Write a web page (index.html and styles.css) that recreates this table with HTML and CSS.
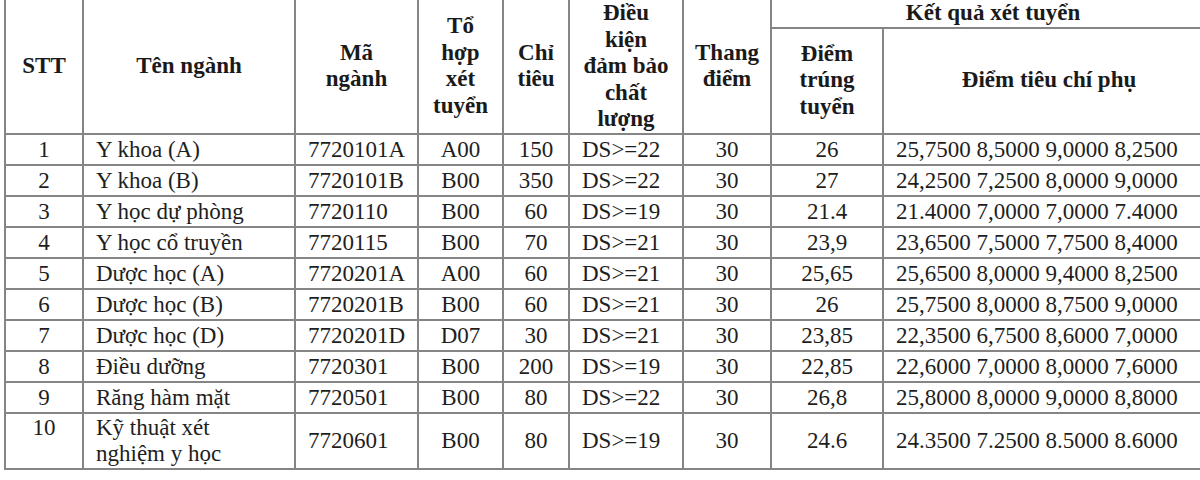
FILE: index.html
```html
<!DOCTYPE html>
<html lang="vi">
<head>
<meta charset="utf-8">
<title>Kết quả xét tuyển</title>
<link rel="stylesheet" href="styles.css">
</head>
<body>
<table class="tbl">
  <colgroup>
    <col class="c-stt"><col class="c-ten"><col class="c-ma"><col class="c-to"><col class="c-chi">
    <col class="c-dk"><col class="c-thang"><col class="c-trung"><col class="c-phu">
  </colgroup>
  <thead>
    <tr class="h1">
      <th rowspan="2">STT</th>
      <th rowspan="2">Tên ngành</th>
      <th rowspan="2">Mã<br>ngành</th>
      <th rowspan="2">Tổ<br>hợp<br>xét<br>tuyển</th>
      <th rowspan="2">Chỉ<br>tiêu</th>
      <th rowspan="2">Điều<br>kiện<br>đảm bảo<br>chất<br>lượng</th>
      <th rowspan="2">Thang<br>điểm</th>
      <th colspan="2" class="group">Kết quả xét tuyển</th>
    </tr>
    <tr class="h2">
      <th>Điểm<br>trúng<br>tuyển</th>
      <th>Điểm tiêu chí phụ</th>
    </tr>
  </thead>
  <tbody>
    <tr><td class="ctr">1</td><td>Y khoa (A)</td><td>7720101A</td><td class="ctr">A00</td><td class="ctr">150</td><td>DS&gt;=22</td><td class="ctr">30</td><td class="ctr">26</td><td>25,7500 8,5000 9,0000 8,2500</td></tr>
    <tr><td class="ctr">2</td><td>Y khoa (B)</td><td>7720101B</td><td class="ctr">B00</td><td class="ctr">350</td><td>DS&gt;=22</td><td class="ctr">30</td><td class="ctr">27</td><td>24,2500 7,2500 8,0000 9,0000</td></tr>
    <tr><td class="ctr">3</td><td>Y học dự phòng</td><td>7720110</td><td class="ctr">B00</td><td class="ctr">60</td><td>DS&gt;=19</td><td class="ctr">30</td><td class="ctr">21.4</td><td>21.4000 7,0000 7,0000 7.4000</td></tr>
    <tr><td class="ctr">4</td><td>Y học cổ truyền</td><td>7720115</td><td class="ctr">B00</td><td class="ctr">70</td><td>DS&gt;=21</td><td class="ctr">30</td><td class="ctr">23,9</td><td>23,6500 7,5000 7,7500 8,4000</td></tr>
    <tr><td class="ctr">5</td><td>Dược học (A)</td><td>7720201A</td><td class="ctr">A00</td><td class="ctr">60</td><td>DS&gt;=21</td><td class="ctr">30</td><td class="ctr">25,65</td><td>25,6500 8,0000 9,4000 8,2500</td></tr>
    <tr><td class="ctr">6</td><td>Dược học (B)</td><td>7720201B</td><td class="ctr">B00</td><td class="ctr">60</td><td>DS&gt;=21</td><td class="ctr">30</td><td class="ctr">26</td><td>25,7500 8,0000 8,7500 9,0000</td></tr>
    <tr><td class="ctr">7</td><td>Dược học (D)</td><td>7720201D</td><td class="ctr">D07</td><td class="ctr">30</td><td>DS&gt;=21</td><td class="ctr">30</td><td class="ctr">23,85</td><td>22,3500 6,7500 8,6000 7,0000</td></tr>
    <tr><td class="ctr">8</td><td>Điều dưỡng</td><td>7720301</td><td class="ctr">B00</td><td class="ctr">200</td><td>DS&gt;=19</td><td class="ctr">30</td><td class="ctr">22,85</td><td>22,6000 7,0000 8,0000 7,6000</td></tr>
    <tr><td class="ctr">9</td><td>Răng hàm mặt</td><td>7720501</td><td class="ctr">B00</td><td class="ctr">80</td><td>DS&gt;=22</td><td class="ctr">30</td><td class="ctr">26,8</td><td>25,8000 8,0000 9,0000 8,8000</td></tr>
    <tr class="tall"><td class="ctr top">10</td><td>Kỹ thuật xét<br>nghiệm y học</td><td>7720601</td><td class="ctr">B00</td><td class="ctr">80</td><td>DS&gt;=19</td><td class="ctr">30</td><td class="ctr">24.6</td><td>24.3500 7.2500 8.5000 8.6000</td></tr>
  </tbody>
</table>
</body>
</html>
```
FILE: styles.css
```css
html, body {
  margin: 0;
  padding: 0;
  background: #ffffff;
  overflow: hidden;
  width: 1200px;
  height: 480px;
}

.tbl {
  border-collapse: collapse;
  table-layout: fixed;
  width: 1210px;
  margin: -2px 0 0 4px;
  font-family: "Times New Roman", "Liberation Serif", "DejaVu Serif", serif;
  font-size: 23px;
  color: #1e1e1e;
}

.tbl th,
.tbl td {
  font-family: "Times New Roman", "Liberation Serif", "DejaVu Serif", serif;
}

.c-stt { width: 78px; }
.c-ten { width: 212px; }
.c-ma { width: 123px; }
.c-to { width: 85px; }
.c-chi { width: 66px; }
.c-dk { width: 114px; }
.c-thang { width: 88px; }
.c-trung { width: 112px; }
.c-phu { width: 332px; }

.tbl th,
.tbl td {
  border: 2px solid #858585;
  white-space: nowrap;
  overflow: hidden;
}

.tbl th {
  font-weight: bold;
  line-height: 26.5px;
  padding: 0 4px;
  text-align: center;
  vertical-align: middle;
  color: #1a1a1a;
}

.tbl .h1 th.group {
  height: 26px;
}

.tbl td {
  line-height: 27px;
  padding: 1px 12px;
  text-align: left;
  vertical-align: middle;
}

.tbl td.ctr {
  text-align: center;
  padding-left: 4px;
  padding-right: 4px;
}

.tbl td.top {
  vertical-align: top;
}

.tbl tr.tall td {
  line-height: 26px;
}
```
